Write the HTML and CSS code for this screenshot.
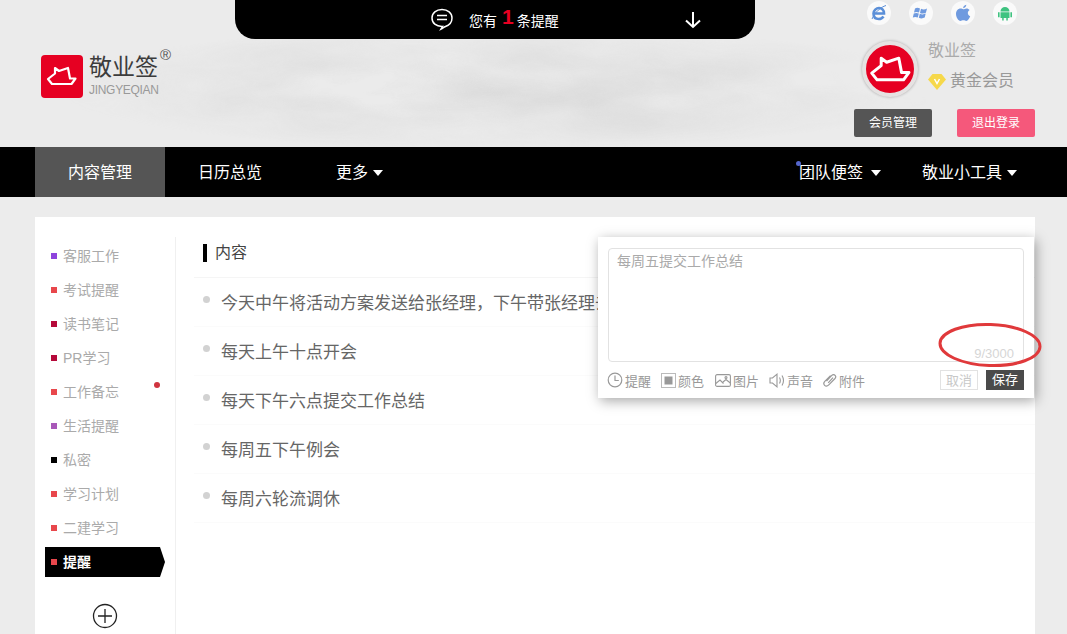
FILE: index.html
```html
<!DOCTYPE html>
<html lang="zh-CN">
<head>
    <meta charset="UTF-8">
    <title>敬业签</title>
    <link rel="stylesheet" href="styles.css">
</head>
<body>

<div class="header">
    <!-- cloud texture behind the header -->
    <svg class="clouds" width="1067" height="147">
        <defs>
            <filter id="cloudNoise" x="0" y="0" width="100%" height="100%">
                <feTurbulence type="fractalNoise" baseFrequency="0.006 0.018" numOctaves="4" seed="8"/>
                <feColorMatrix values="0 0 0 0 0.6  0 0 0 0 0.6  0 0 0 0 0.6  1.300 0 0 0 -0.36"/>
            </filter>
            <radialGradient id="cloudFade" cx="0.47" cy="0.6" r="0.42">
                <stop offset="0" stop-color="#fff"/>
                <stop offset="0.55" stop-color="#aaa"/>
                <stop offset="1" stop-color="#000"/>
            </radialGradient>
            <mask id="cloudMask"><rect width="1067" height="147" fill="url(#cloudFade)"/></mask>
        </defs>
        <g mask="url(#cloudMask)"><rect width="1067" height="147" filter="url(#cloudNoise)"/></g>
    </svg>

    <div class="notice">
        <svg class="notice-chat" width="24" height="24" viewBox="0 0 24 24" fill="none" stroke="#fff" stroke-width="1.5"><path d="M12 2.5c5.8 0 10 3.6 10 8.4 0 4.3-3 7.2-6.5 8.6-1.500.7-3.200 1.900-4.500 2.600l1.500-2.700C6 19.600 2 16 2 10.900 2 6.100 6.200 2.500 12 2.500z"/><path d="M7 8.500h10M7 12.500h10"/></svg>
        <span class="notice-text">您有<b>1</b>条提醒</span>
        <svg class="notice-arrow" width="18" height="18" viewBox="0 0 18 18" fill="none" stroke="#fff" stroke-width="2"><path d="M9 1v15M2 9.500 9 16l7-6.500"/></svg>
    </div>

    <div class="logo">
        <svg width="42" height="43" viewBox="0 0 42 43"><rect width="42" height="43" rx="4" fill="#e60022"/><path d="M7 24 14 18.500V13L18 16 27 13 29 23.500H34.500L30.500 29H11z" fill="none" stroke="#fff" stroke-width="2.200" stroke-linejoin="round"/></svg>
        <div class="logo-text">
            <div class="logo-cn">敬业签</div>
            <div class="logo-en">JINGYEQIAN</div>
        </div>
        <span class="logo-reg">®</span>
    </div>

    <div class="account">
        <div class="platforms">
            <span class="platform"><svg width="20" height="20" viewBox="0 0 20 20" fill="none" stroke="#5b8fd8"><path d="M4.500 10.500h10.500c0-3.500-2.300-5.500-5-5.500S4.500 7.500 4.500 10.500c0 3.500 2 5.500 5.300 5.500 2 0 3.700-1 4.700-2.500" stroke-width="2.600"/><path d="M3 16c3-7 9-12 14-13.500" stroke-width="1"/></svg></span>
            <span class="platform"><svg width="18" height="18" viewBox="0 0 18 18" fill="#6f9adf"><path d="M3 4.500c1.500-1 3-1 5 0L7 8.500c-1.800-.8-3.300-.8-5 0zM9 4.800c2 .9 3.800.9 6-.3l-1.100 4.200c-2 1-3.900 1-5.900.2zM1.800 9.500c1.700-.8 3.200-.8 5 0l-1 4c-1.800-.8-3.300-.8-5 0zM7.800 9.800c2 .8 3.900.8 5.900-.2l-1 4c-2 1-3.900 1-5.900.2z"/></svg></span>
            <span class="platform"><svg width="18" height="18" viewBox="0 0 18 18" fill="#6f9adf"><path d="M12.300.8c0 1.800-1.300 3.300-3.100 3.400C9 2.500 10.500 1 12.300.8zM9.300 5.200c.8 0 1.800-.8 3.200-.8 1.200 0 2.400.6 3.100 1.700-2.600 1.600-2.200 5 .6 6.200-.7 2-2.300 4.700-3.900 4.700-1 0-1.600-.7-2.900-.7s-2 .7-3 .7C4.500 17 2 13.300 2 10c0-3.300 2.200-5.500 4.500-5.500 1.300 0 2.200.7 2.800.7z"/></svg></span>
            <span class="platform"><svg width="18" height="18" viewBox="0 0 18 18" fill="#3fc380"><path d="M4.500 7.500a4.500 4.500 0 0 1 9 0zM4.500 8.300h9V14h-1.700v2.500h-1.500V14H7.700v2.500H6.200V14H4.500zM2 8.300h1.600v5H2zM14.400 8.300H16v5h-1.600z"/></svg></span>
        </div>
        <div class="profile">
            <div class="avatar">
                <svg width="42" height="28" viewBox="5 11 31 20"><path d="M7 24 14 18.500V13L18 16 27 13 29 23.500H34.500L30.500 29H11z" fill="none" stroke="#fff" stroke-width="2.200" stroke-linejoin="round"/></svg>
            </div>
            <div class="profile-info">
                <div class="profile-name">敬业签</div>
                <div class="profile-level">
                    <svg width="18" height="17" viewBox="0 0 18 17"><path d="M4.500 1h9L18 6.500 9 17 0 6.500z" fill="#f6d84a"/><path d="M6.500 6 9 10.500 11.500 6" fill="none" stroke="#fff" stroke-width="1.500"/></svg>
                    <span>黄金会员</span>
                </div>
            </div>
        </div>
        <div class="account-btns">
            <a class="btn btn-dark">会员管理</a>
            <a class="btn btn-pink">退出登录</a>
        </div>
    </div>
</div>

<div class="nav">
    <a class="nav-item nav-active">内容管理</a>
    <a class="nav-item nav-calendar">日历总览</a>
    <a class="nav-item nav-more">更多<i class="caret"></i></a>
    <div class="nav-right">
        <a class="nav-item nav-team"><i class="nav-dot"></i>团队便签<i class="caret caret-wide"></i></a>
        <a class="nav-item nav-tools">敬业小工具<i class="caret"></i></a>
    </div>
</div>

<div class="main">
    <div class="card">
        <ul class="sidebar">
            <li><i class="sq c-purple"></i>客服工作</li>
            <li><i class="sq c-red"></i>考试提醒</li>
            <li><i class="sq c-wine"></i>读书笔记</li>
            <li><i class="sq c-wine"></i>PR学习</li>
            <li><i class="sq c-red"></i>工作备忘<i class="side-dot"></i></li>
            <li><i class="sq c-violet"></i>生活提醒</li>
            <li><i class="sq c-black"></i>私密</li>
            <li><i class="sq c-red"></i>学习计划</li>
            <li><i class="sq c-red"></i>二建学习</li>
            <li class="side-active"><i class="sq c-red"></i>提醒</li>
            <li class="side-add">
                <svg width="26" height="26" viewBox="0 0 26 26" fill="none" stroke="#222" stroke-width="1.300"><circle cx="13" cy="13" r="11.500"/><path d="M6 13h14M13 6v14"/></svg>
            </li>
        </ul>
        <div class="content">
            <div class="content-title"><span>内容</span></div>
            <ul class="notes">
                <li>今天中午将活动方案发送给张经理，下午带张经理去</li>
                <li>每天上午十点开会</li>
                <li>每天下午六点提交工作总结</li>
                <li>每周五下午例会</li>
                <li>每周六轮流调休</li>
            </ul>
        </div>
    </div>
</div>

<div class="editor">
    <div class="editor-box">
        <div class="editor-text">每周五提交工作总结</div>
        <div class="editor-count">9/3000</div>
    </div>
    <div class="editor-bar">
        <span class="tool"><svg width="16" height="16" viewBox="0 0 16 16" fill="none" stroke="#999" stroke-width="1.200"><circle cx="8" cy="8" r="6.800"/><path d="M8 3.500V8.500h3.800"/></svg>提醒</span>
        <span class="tool"><svg width="15" height="15" viewBox="0 0 15 15"><rect x=".5" y=".5" width="14" height="14" fill="none" stroke="#bbb"/><rect x="3.500" y="3.500" width="8" height="8" fill="#999"/></svg>颜色</span>
        <span class="tool"><svg width="16" height="13" viewBox="0 0 16 13" fill="none" stroke="#999" stroke-width="1.100"><rect x=".6" y=".6" width="14.800" height="11.800" rx="1.500"/><path d="M.8 9.500 5 6l3.500 3.500M8 8l3-2.500 4.300 3.500"/><circle cx="11" cy="3.500" r="1"/></svg>图片</span>
        <span class="tool"><svg width="16" height="15" viewBox="0 0 16 15" fill="none" stroke="#999" stroke-width="1.100"><path d="M1 5h2.500L8 1.200v12.600L3.500 10H1z"/><path d="M10.500 4.500c1 1.800 1 4.200 0 6M13 2.500c1.800 3 1.800 7 0 10"/></svg>声音</span>
        <span class="tool"><svg width="14" height="14" viewBox="0 0 14 14" fill="none" stroke="#999" stroke-width="1.200"><path d="M3.500 8 8.800 2.400c1-1 2.500-1 3.300-.1.800.9.800 2.200-.1 3.200L5.800 11.900c-1.400 1.400-3.200 1.400-4.200.4-1-1-.9-2.700.2-3.900L7.500 2.600M5.200 9.800 10 4.700"/></svg>附件</span>
        <span class="editor-btns">
            <a class="btn-cancel">取消</a>
            <a class="btn-save">保存</a>
        </span>
    </div>
    <svg class="editor-mark" width="106" height="48" viewBox="0 0 106 48" fill="none"><ellipse cx="53" cy="24" rx="50" ry="20.500" stroke="#e0393b" stroke-width="3" transform="rotate(2 53 24)"/></svg>
</div>

</body>
</html>
```

FILE: styles.css
```css
* {
    box-sizing: border-box;
}
html, body {
    height: 634px;
    overflow: hidden;
}
body {
    margin: 0;
    position: relative;
    background-color: #ececec;
    font-family: "Liberation Sans", "Noto Sans CJK SC", sans-serif;
    color: #333;
}
ul {
    margin: 0;
    padding: 0;
    list-style: none;
}
i {
    font-style: normal;
}

/* header */
.header {
    height: 147px;
    display: flex;
    justify-content: space-between;
    position: relative;
    background-color: #ebebeb;
}
.clouds {
    position: absolute;
    left: 0;
    top: 0;
}
.notice {
    position: absolute;
    left: 235px;
    top: 0;
    width: 520px;
    height: 39px;
    background-color: #000;
    border-radius: 0 0 20px 20px;
    color: #fff;
    display: flex;
    align-items: center;
}
.notice-chat {
    margin-left: 195px;
    margin-top: -1px;
}
.notice-text {
    margin-left: 15px;
    font-size: 14px;
    display: flex;
    align-items: center;
}
.notice-text b {
    color: #e60022;
    font-size: 21px;
    margin: -6px 3px 0 5px;
}
.notice-arrow {
    margin-left: 125px;
    margin-top: 1px;
}
.logo {
    margin: 55px 0 0 41px;
    display: flex;
    height: 43px;
    position: relative;
}
.logo-text {
    margin-left: 6px;
}
.logo-cn {
    font-size: 23px;
    line-height: 28px;
    margin-top: -2px;
    color: #3c3c3c;
}
.logo-en {
    font-size: 12px;
    line-height: 14px;
    margin-top: 2px;
    letter-spacing: -.3px;
    color: #999;
}
.logo-reg {
    position: absolute;
    left: 119px;
    top: -9px;
    font-size: 15px;
    color: #555;
}
.account {
    width: 181px;
    margin-right: 32px;
    position: relative;
}
.platforms {
    display: flex;
    gap: 18px;
    margin: 1px 0 0 13px;
}
.platform {
    width: 24px;
    height: 24px;
    border-radius: 50%;
    background-color: #fafafa;
    display: flex;
    align-items: center;
    justify-content: center;
}
.profile {
    display: flex;
    margin: 16px 0 0 8px;
}
.avatar {
    width: 56px;
    height: 56px;
    border-radius: 50%;
    background-color: #e60022;
    border: 4px solid #e6e2e2;
    box-shadow: 0 0 3px rgba(0,0,0,.3);
    display: flex;
    align-items: center;
    justify-content: center;
    flex-shrink: 0;
}
.profile-info {
    margin-left: 10px;
}
.profile-name {
    font-size: 16px;
    line-height: 22px;
    margin-top: -1px;
    color: #aaa;
}
.profile-level {
    display: flex;
    align-items: center;
    margin-top: 8px;
    font-size: 16px;
    line-height: 22px;
    color: #999;
}
.profile-level span {
    margin-left: 4px;
    white-space: nowrap;
}
.account-btns {
    display: flex;
    justify-content: space-between;
    margin-top: 12px;
}
.btn {
    width: 78px;
    height: 28px;
    border-radius: 2px;
    font-size: 12px;
    line-height: 29px;
    text-align: center;
    color: #fff;
}
.btn-dark {
    background-color: #555;
}
.btn-pink {
    background-color: #f5587b;
}

/* nav */
.nav {
    height: 50px;
    background-color: #000;
    display: flex;
    padding-left: 35px;
    color: #fff;
    font-size: 16px;
    line-height: 50px;
}
.nav-item {
    height: 50px;
    padding-top: 2px;
    display: flex;
    align-items: center;
    position: relative;
}
.nav-active {
    width: 130px;
    justify-content: center;
    background-color: #555;
}
.nav-calendar {
    margin-left: 33px;
}
.nav-more {
    margin-left: 74px;
}
.nav-right {
    margin-left: auto;
    display: flex;
    padding-right: 50px;
}
.nav-tools {
    margin-left: 41px;
}
.caret {
    width: 0;
    height: 0;
    margin-left: 5px;
    border-left: 5.500px solid transparent;
    border-right: 5.500px solid transparent;
    border-top: 6px solid #fff;
}
.caret-wide {
    margin-left: 8px;
}
.nav-dot {
    position: absolute;
    left: -3px;
    top: 14px;
    width: 5px;
    height: 5px;
    border-radius: 50%;
    background-color: #5566cc;
}

/* content */
.main {
    padding: 20px 32px 0 35px;
}
.card {
    height: 417px;
    background-color: #fff;
    display: flex;
    padding-top: 20px;
}
.sidebar {
    width: 141px;
    padding: 2px 0 0 10px;
    border-right: 1px solid #f0f0f0;
}
.sidebar li {
    height: 34px;
    line-height: 34px;
    font-size: 14px;
    color: #aaa;
    display: flex;
    align-items: center;
    position: relative;
}
.sq {
    width: 6px;
    height: 6px;
    margin: 0 6px;
}
.c-purple { background-color: #8e44dd; }
.c-red { background-color: #e8474c; }
.c-wine { background-color: #b5093a; }
.c-violet { background-color: #a858b8; }
.c-black { background-color: #000; }
.side-dot {
    position: absolute;
    left: 109px;
    top: 7px;
    width: 6px;
    height: 6px;
    border-radius: 50%;
    background-color: #d0343f;
}
.sidebar li.side-active {
    width: 120px;
    height: 30px;
    margin-top: 2px;
    color: #fff;
    font-weight: bold;
    background-color: #000;
    clip-path: polygon(0 0, 115px 0, 120px 50%, 115px 100%, 0 100%);
}
.sidebar li.side-add {
    height: 26px;
    margin-top: 26px;
    padding-left: 47px;
}
.content {
    flex: 1;
    padding-left: 18px;
}
.content-title {
    height: 41px;
    border-bottom: 1px solid #f5f5f5;
    padding: 7px 0 0 9px;
}
.content-title span {
    display: block;
    height: 18px;
    border-left: 4px solid #000;
    padding-left: 8px;
    font-size: 16px;
    line-height: 18px;
    color: #444;
}
.notes li {
    height: 49px;
    padding-left: 27px;
    border-bottom: 1px solid #fbfbfb;
    font-size: 17px;
    line-height: 52px;
    color: #666;
    position: relative;
    white-space: nowrap;
    overflow: hidden;
}
.notes li::before {
    content: "";
    position: absolute;
    left: 9px;
    top: 18px;
    width: 7px;
    height: 7px;
    border-radius: 50%;
    background-color: #d2d2d2;
}

/* editor popup over the list */
.editor {
    position: absolute;
    left: 598px;
    top: 237px;
    width: 436px;
    height: 161px;
    padding: 11px 10px 0;
    background-color: #fff;
    box-shadow: 2px 3px 12px rgba(0,0,0,.35);
}
.editor-box {
    height: 114px;
    border: 1px solid #e2e2e2;
    border-radius: 4px;
    padding: 3px 8px;
    position: relative;
}
.editor-text {
    font-size: 14px;
    line-height: 18px;
    color: #aaa;
}
.editor-count {
    position: absolute;
    right: 9px;
    bottom: 0;
    font-size: 13px;
    line-height: 15px;
    color: #d6d6d6;
}
.editor-bar {
    display: flex;
    align-items: center;
    height: 20px;
    margin-top: 8px;
    margin-left: -1px;
    font-size: 13px;
    color: #999;
}
.tool {
    width: 54px;
    display: flex;
    align-items: center;
    gap: 2px;
}
.editor-btns {
    margin-left: auto;
    display: flex;
    gap: 8px;
}
.btn-cancel,
.btn-save {
    width: 38px;
    height: 20px;
    line-height: 19px;
    text-align: center;
}
.btn-cancel {
    border: 1px solid #e2e2e2;
    color: #c8c8c8;
}
.btn-save {
    background-color: #4a4a4a;
    color: #fff;
}
.editor-mark {
    position: absolute;
    left: 339px;
    top: 84px;
}
```
